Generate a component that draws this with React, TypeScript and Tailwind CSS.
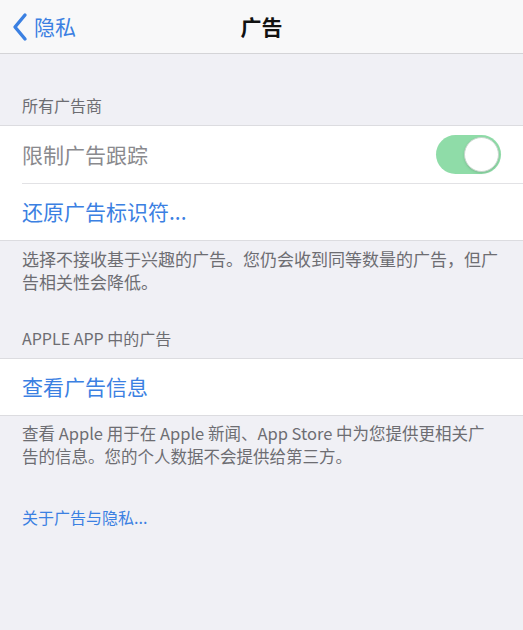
import React from "react";

const font = { fontFamily: '"PingFang SC", "Noto Sans CJK SC", "Noto Sans", sans-serif' };

function Toggle() {
  return (
    <div className="relative w-[65px] h-[39px] rounded-full bg-[#8fdca8]">
      <div className="absolute right-[2px] top-[2px] w-[35px] h-[35px] rounded-full bg-white border border-[#c7d6cc] shadow-sm" />
    </div>
  );
}

export default function App() {
  return (
    <div className="w-[523px] h-[630px] bg-[#f0f0f5] overflow-hidden" style={font}>
      {/* Nav bar */}
      <div className="relative h-[54px] bg-[#f8f8f9] border-b border-[#d4d4d7] flex items-center">
        <div className="flex items-center pl-[11px] text-[#3b80e2]">
          <svg width="18" height="30" viewBox="0 0 18 30" fill="none">
            <path d="M14 3 L4 15 L14 27" stroke="#3b80e2" strokeWidth="3.4" strokeLinecap="round" strokeLinejoin="round" />
          </svg>
          <span className="ml-[5px] text-[21px] leading-none">隐私</span>
        </div>
        <div className="absolute inset-0 flex items-center justify-center">
          <span className="text-[21px] font-semibold text-[#111] leading-none">广告</span>
        </div>
      </div>

      {/* All advertisers */}
      <div className="pt-[40px] pb-[9px] px-[22px] text-[16px] leading-[22px] text-[#6d6d72]">所有广告商</div>
      <div className="bg-white border-y border-[#dcdce0]">
        <div className="h-[57px] flex items-center justify-between pl-[22px] pr-[22px]">
          <span className="text-[21px] text-[#8a8a8e]">限制广告跟踪</span>
          <Toggle />
        </div>
        <div className="ml-[22px] border-t border-[#e2e2e5]" />
        <div className="h-[56px] flex items-center pl-[22px]">
          <span className="text-[21px] text-[#3b80e2]">还原广告标识符...</span>
        </div>
      </div>
      <div className="px-[22px] pt-[6px] text-[17px] leading-[23px] text-[#6d6d72] whitespace-nowrap">
        选择不接收基于兴趣的广告。您仍会收到同等数量的广告，但广
        <br />
        告相关性会降低。
      </div>

      {/* Apple apps */}
      <div className="pt-[34px] pb-[9px] px-[22px] text-[16px] leading-[22px] text-[#6d6d72]">APPLE APP 中的广告</div>
      <div className="bg-white border-y border-[#dcdce0]">
        <div className="h-[56px] flex items-center pl-[22px]">
          <span className="text-[21px] text-[#3b80e2]">查看广告信息</span>
        </div>
      </div>
      <div className="px-[22px] pt-[6px] text-[16.5px] leading-[23px] text-[#6d6d72] whitespace-nowrap">
        查看 Apple 用于在 Apple 新闻、App Store 中为您提供更相关广
        <br />
        告的信息。您的个人数据不会提供给第三方。
      </div>

      <div className="px-[22px] pt-[38px] text-[16px] leading-[22px] text-[#3b80e2]">关于广告与隐私...</div>
    </div>
  );
}
